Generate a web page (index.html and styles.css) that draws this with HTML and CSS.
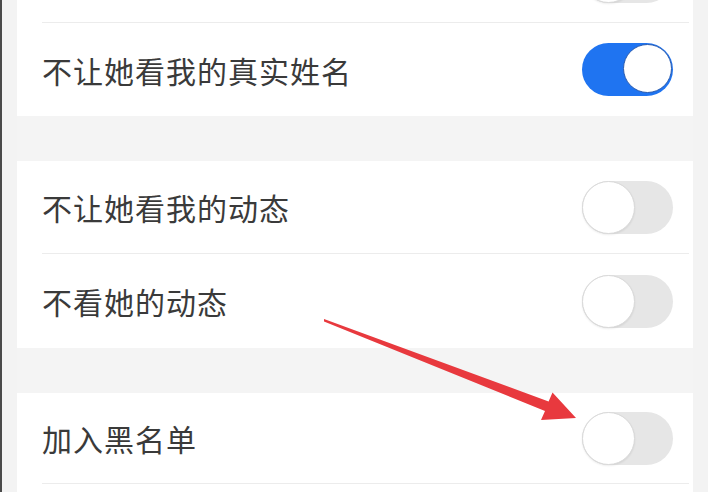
FILE: index.html
```html
<!DOCTYPE html>
<html lang="zh-CN">
<head>
<meta charset="utf-8">
<title>设置</title>
<link rel="stylesheet" href="styles.css">
</head>
<body>
<div class="page">
  <div class="column">
    <div class="group">
      <div class="row row-top">
        <span class="label"></span>
        <span class="switch"><span class="knob"></span></span>
      </div>
      <div class="divider"></div>
      <div class="row row-a">
        <span class="label">不让她看我的真实姓名</span>
        <span class="switch on"><span class="knob"></span></span>
      </div>
    </div>
    <div class="gap"></div>
    <div class="group">
      <div class="row row-b">
        <span class="label">不让她看我的动态</span>
        <span class="switch"><span class="knob"></span></span>
      </div>
      <div class="divider"></div>
      <div class="row row-c">
        <span class="label">不看她的动态</span>
        <span class="switch"><span class="knob"></span></span>
      </div>
    </div>
    <div class="gap"></div>
    <div class="group">
      <div class="row row-d">
        <span class="label">加入黑名单</span>
        <span class="switch"><span class="knob"></span></span>
      </div>
      <div class="divider"></div>
      <div class="row row-e"></div>
    </div>
  </div>
  <svg class="arrow" width="708" height="492" viewBox="0 0 708 492" aria-hidden="true">
    <polygon points="324,319 548.6,401.5 552.5,392.5 576,418 541,420 545,410.9 324,321.5" fill="#e8393e"/>
  </svg>
</div>
</body>
</html>
```

FILE: styles.css
```css
html, body {
  margin: 0;
  padding: 0;
  background: #f3f3f3;
  overflow: hidden;
}

.page {
  position: relative;
  width: 708px;
  height: 492px;
  overflow: hidden;
  border-left: 2px solid #4a4a4a;
  box-sizing: border-box;
  background: #f3f3f3;
}

.column {
  margin-top: -70px;
  margin-left: 15px;
  width: 676px;
  display: flex;
  flex-direction: column;
}

.group {
  background: #ffffff;
  display: flex;
  flex-direction: column;
}

.gap {
  height: 45px;
  background: #f4f4f4;
}

.row {
  display: flex;
  align-items: center;
  justify-content: space-between;
  padding: 0 20px 0 25px;
}

.row-top { height: 92px; }
.row-a { height: 93px; }
.row-b { height: 92px; }
.row-c { height: 94px; }
.row-d { height: 90px; }
.row-e { height: 60px; }

.divider {
  height: 1px;
  background: #ececec;
  margin-left: 25px;
  margin-right: 4px;
}

.label {
  font-family: "Noto Sans CJK SC", "Noto Sans", sans-serif;
  font-size: 30px;
  letter-spacing: 1px;
  color: #3a3a3a;
  line-height: 1;
}

.switch {
  position: relative;
  width: 91px;
  height: 53px;
  border-radius: 27px;
  background: #e6e6e6;
  flex: none;
}

.switch .knob {
  position: absolute;
  left: 0;
  top: 0;
  width: 51px;
  height: 51px;
  border-radius: 50%;
  background: #ffffff;
  border: 1px solid #d9d9d9;
  box-shadow: 0 1px 2px rgba(0, 0, 0, 0.08);
}

.switch.on {
  background: #1f74f1;
}

.switch.on .knob {
  left: auto;
  right: 1px;
  top: 1px;
  width: 47px;
  height: 47px;
  border: 1.5px solid #2a5cb0;
  box-shadow: none;
}

.arrow {
  position: absolute;
  left: -2px;
  top: 0;
  pointer-events: none;
}
```
